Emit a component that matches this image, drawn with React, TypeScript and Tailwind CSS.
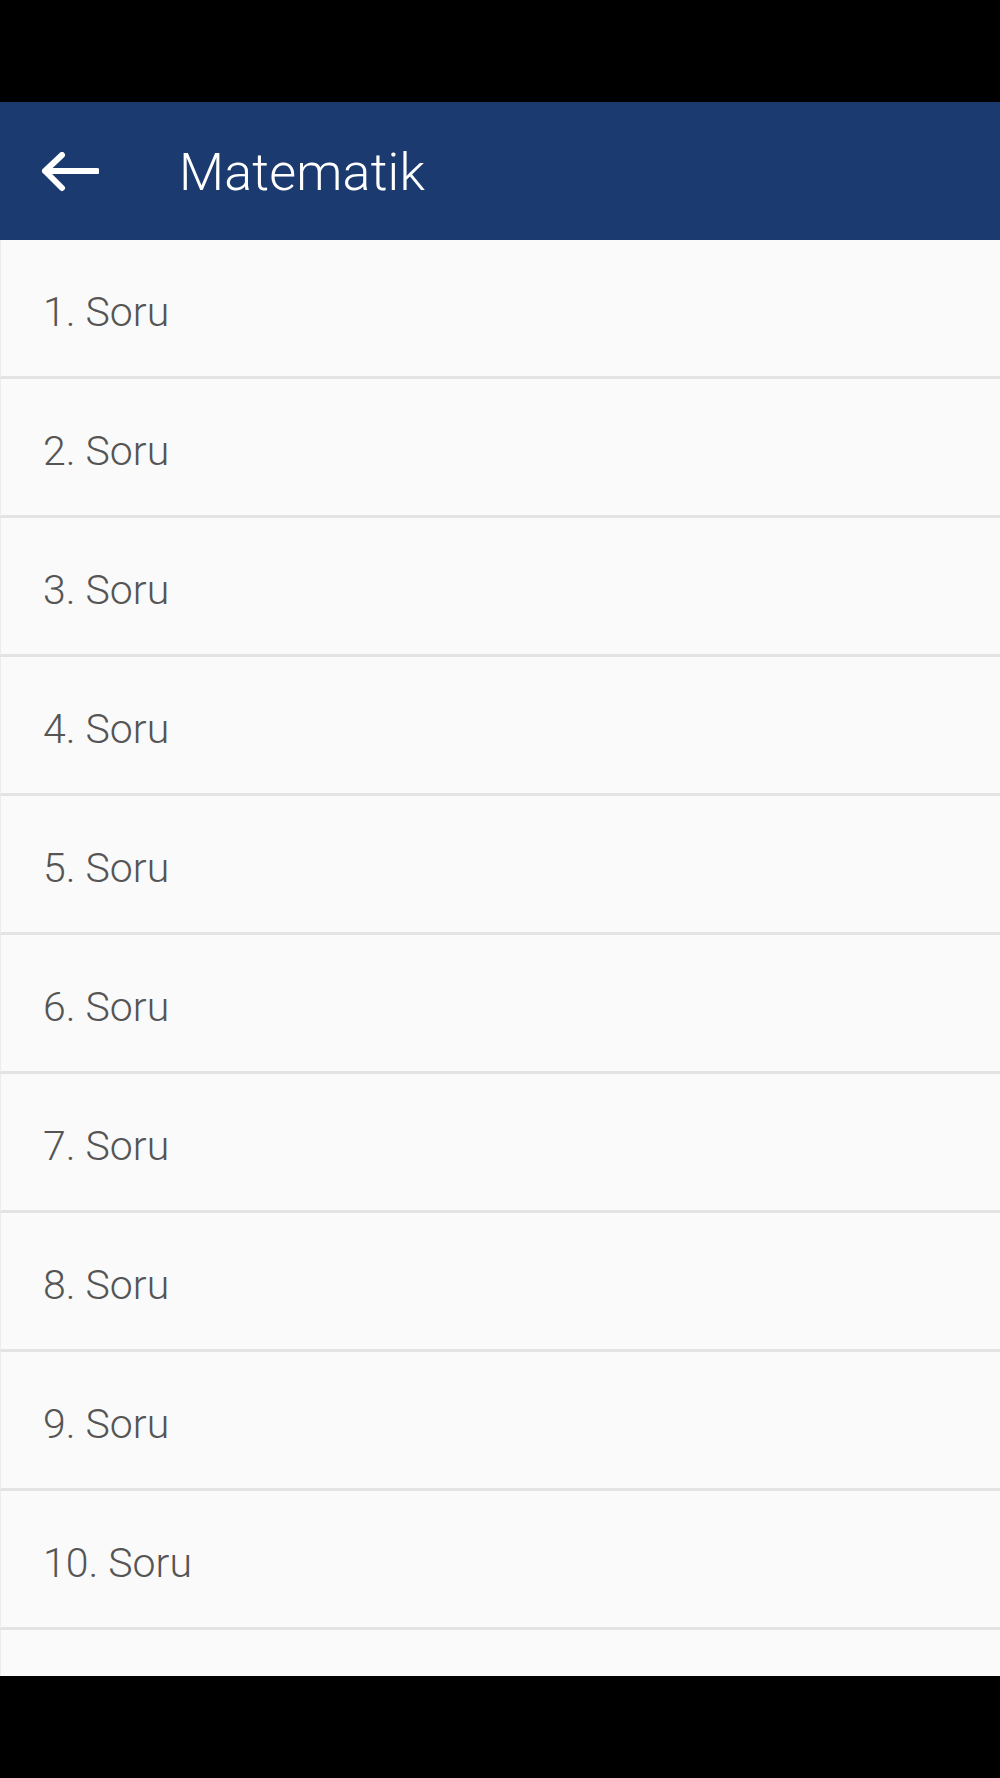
const ROWS = Array.from({ length: 10 }, (_, i) => `${i + 1}. Soru`)

function BackArrow() {
  return (
    <svg width="58" height="40" viewBox="0 0 58 40" fill="none">
      <path
        d="M4 19H56M21 3L4 19L21 36"
        stroke="white"
        strokeWidth="6"
        strokeLinecap="round"
        strokeLinejoin="round"
      />
    </svg>
  )
}

export default function App() {
  return (
    <div
      className="w-[1000px] h-[1778px] bg-black flex flex-col overflow-hidden"
      style={{ fontFamily: "Roboto, 'Liberation Sans', sans-serif" }}
    >
      {/* Status bar area */}
      <div className="h-[102px] shrink-0 bg-black" />

      {/* Toolbar */}
      <div className="h-[138px] shrink-0 bg-[#1b3a6f] flex items-center">
        <div className="w-[179px] pl-[41px] pt-[2px] flex items-center">
          <BackArrow />
        </div>
        <h1 className="pt-[4px] text-[52px] font-light text-white leading-none tracking-[0.2px]">Matematik</h1>
      </div>

      {/* List */}
      <div className="h-[1436px] shrink-0 bg-[#fafafa] overflow-hidden">
        {ROWS.map((label) => (
          <div
            key={label}
            className="h-[139px] flex items-center pl-[42px] pt-[9px] border-b-[3px] border-[#e3e3e3] border-l border-l-[#ececec]"
          >
            <span className="text-[41px] font-light text-[#555555] leading-none">{label}</span>
          </div>
        ))}
        <div className="h-[60px] border-l border-l-[#ececec]" />
      </div>

      <div className="flex-1 bg-black" />
    </div>
  )
}
